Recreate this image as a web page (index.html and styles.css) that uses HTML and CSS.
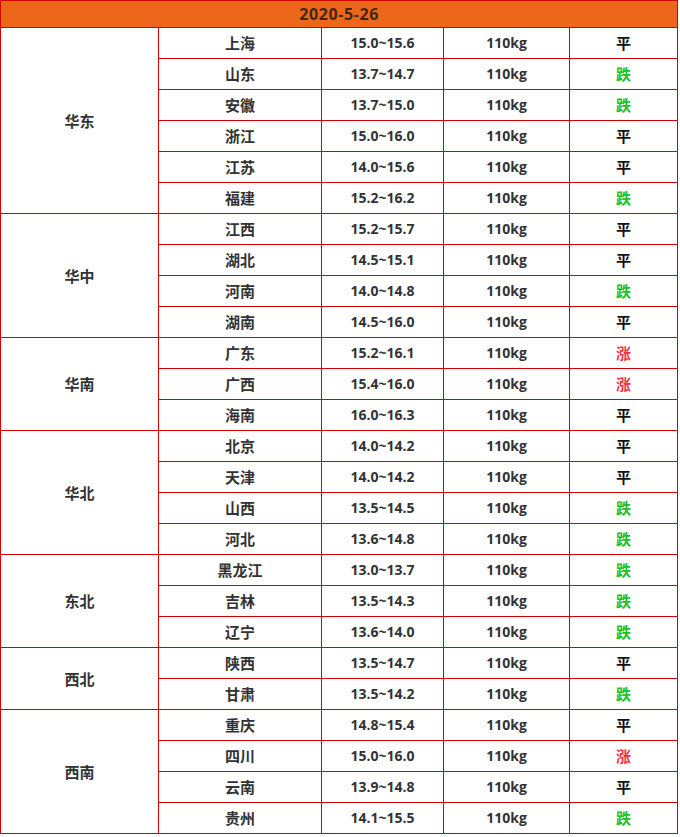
FILE: index.html
```html
<!DOCTYPE html>
<html lang="zh">
<head>
<meta charset="utf-8">
<link rel="stylesheet" href="styles.css">
</head>
<body>
<table class="price">
<colgroup>
<col class="c1"><col class="c2"><col class="c3"><col class="c4"><col class="c5">
</colgroup>
<thead>
<tr class="head"><th colspan="5">2020-5-26</th></tr>
</thead>
<tbody>
<tr><td rowspan="6" class="region">华东</td><td>上海</td><td>15.0~15.6</td><td>110kg</td><td class="flat">平</td></tr>
<tr><td>山东</td><td>13.7~14.7</td><td>110kg</td><td class="down">跌</td></tr>
<tr><td>安徽</td><td>13.7~15.0</td><td>110kg</td><td class="down">跌</td></tr>
<tr><td>浙江</td><td>15.0~16.0</td><td>110kg</td><td class="flat">平</td></tr>
<tr><td>江苏</td><td>14.0~15.6</td><td>110kg</td><td class="flat">平</td></tr>
<tr><td>福建</td><td>15.2~16.2</td><td>110kg</td><td class="down">跌</td></tr>
<tr><td rowspan="4" class="region">华中</td><td>江西</td><td>15.2~15.7</td><td>110kg</td><td class="flat">平</td></tr>
<tr><td>湖北</td><td>14.5~15.1</td><td>110kg</td><td class="flat">平</td></tr>
<tr><td>河南</td><td>14.0~14.8</td><td>110kg</td><td class="down">跌</td></tr>
<tr><td>湖南</td><td>14.5~16.0</td><td>110kg</td><td class="flat">平</td></tr>
<tr><td rowspan="3" class="region">华南</td><td>广东</td><td>15.2~16.1</td><td>110kg</td><td class="up">涨</td></tr>
<tr><td>广西</td><td>15.4~16.0</td><td>110kg</td><td class="up">涨</td></tr>
<tr><td>海南</td><td>16.0~16.3</td><td>110kg</td><td class="flat">平</td></tr>
<tr><td rowspan="4" class="region">华北</td><td>北京</td><td>14.0~14.2</td><td>110kg</td><td class="flat">平</td></tr>
<tr><td>天津</td><td>14.0~14.2</td><td>110kg</td><td class="flat">平</td></tr>
<tr><td>山西</td><td>13.5~14.5</td><td>110kg</td><td class="down">跌</td></tr>
<tr><td>河北</td><td>13.6~14.8</td><td>110kg</td><td class="down">跌</td></tr>
<tr><td rowspan="3" class="region">东北</td><td>黑龙江</td><td>13.0~13.7</td><td>110kg</td><td class="down">跌</td></tr>
<tr><td>吉林</td><td>13.5~14.3</td><td>110kg</td><td class="down">跌</td></tr>
<tr><td>辽宁</td><td>13.6~14.0</td><td>110kg</td><td class="down">跌</td></tr>
<tr><td rowspan="2" class="region">西北</td><td>陕西</td><td>13.5~14.7</td><td>110kg</td><td class="flat">平</td></tr>
<tr><td>甘肃</td><td>13.5~14.2</td><td>110kg</td><td class="down">跌</td></tr>
<tr><td rowspan="4" class="region">西南</td><td>重庆</td><td>14.8~15.4</td><td>110kg</td><td class="flat">平</td></tr>
<tr><td>四川</td><td>15.0~16.0</td><td>110kg</td><td class="up">涨</td></tr>
<tr><td>云南</td><td>13.9~14.8</td><td>110kg</td><td class="flat">平</td></tr>
<tr><td>贵州</td><td>14.1~15.5</td><td>110kg</td><td class="down">跌</td></tr>
</tbody>
</table>
</body>
</html>
```

FILE: styles.css
```css
html, body {
  margin: 0;
  padding: 0;
  background: #ffffff;
}

body {
  font-family: "Open Sans", "Noto Sans CJK SC", sans-serif;
  color: #333333;
}

.price {
  border-collapse: collapse;
  table-layout: fixed;
  width: 677px;
}

.c1 { width: 158px; }
.c2 { width: 163px; }
.c3 { width: 122px; }
.c4 { width: 126px; }
.c5 { width: 108px; }

.price th,
.price td {
  border: 1px solid #d20000;
  padding: 0;
  text-align: center;
  vertical-align: middle;
  font-weight: 700;
  font-size: 14px;
  line-height: 18px;
}

.price td {
  height: 30px;
}

.price td.region,
.price td:nth-last-child(4),
.price td:last-child {
  font-size: 15px;
}

.head th {
  height: 26px;
  background: #ec671a;
  color: #43280f;
  font-size: 16px;
  letter-spacing: 0.6px;
}

.flat { color: #111111; }
.down { color: #22c022; }
.up { color: #ee3344; }
```
